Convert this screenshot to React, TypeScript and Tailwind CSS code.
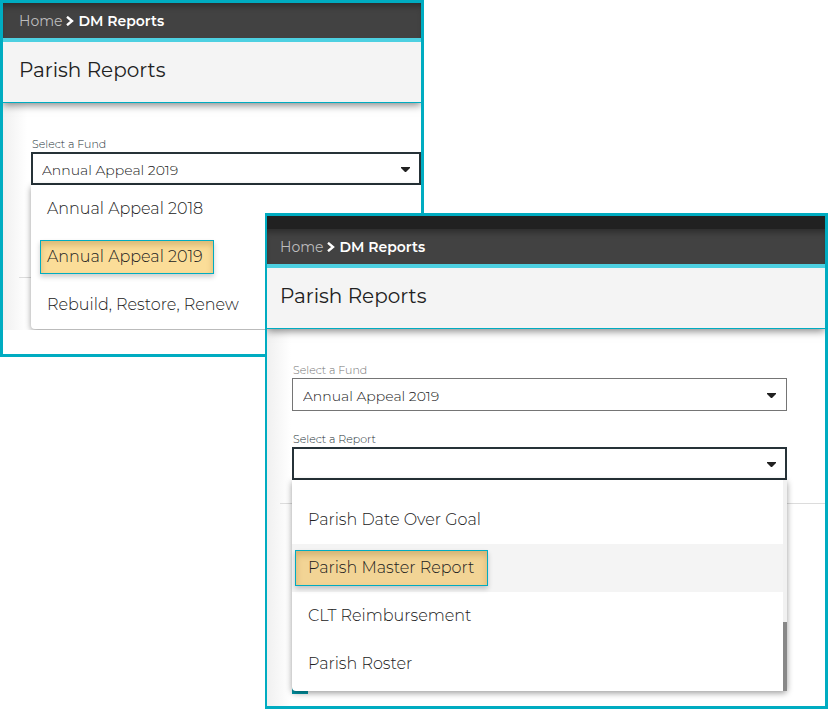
import React, { useState } from 'react';
import clsx from 'clsx';

type SelectFieldProps = {
  id: string;
  label: string;
  value: string;
  options: string[];
  active?: boolean;
  onChange: (value: string) => void;
  children?: React.ReactNode;
};

const SelectField = ({ id, label, value, options, active, onChange, children }: SelectFieldProps) => (
  <div>
    <label
      htmlFor={id}
      className={clsx('block h-4 pl-px text-[11px] leading-4 font-light', active ? 'text-[#263238]' : 'text-[#757575]')}
    >
      {label}
    </label>
    <div className="relative">
      <select
        id={id}
        value={value}
        onChange={(e) => onChange(e.target.value)}
        className={clsx(
          'block h-[33px] w-full appearance-none bg-white pt-0.5 text-sm font-light text-[#212121] outline-none',
          active ? 'border-2 border-[#263238] px-[9px]' : 'border border-[#757575] px-[10px]'
        )}
      >
        {options.map((option) => (
          <option key={option} value={option}>
            {option}
          </option>
        ))}
      </select>
      <svg viewBox="0 0 9 5" className="pointer-events-none absolute top-[15px] right-[11px] h-[5px] w-[9px]" aria-hidden="true">
        <path d="M0 0h9v1L5 5H4L0 1z" fill="#212121" />
      </svg>
      {children}
    </div>
  </div>
);

const PageHeader = ({ inset }: { inset: string }) => (
  <header className="relative">
    <nav
      className={clsx(
        'relative z-10 flex h-[39px] items-center gap-1 border-b-4 border-[#4dd0e1] bg-[#424242] text-sm shadow-[inset_0_6px_6px_-3px_rgba(0,0,0,0.35)]',
        inset
      )}
    >
      <a href="#home" className="text-[#bdbdbd]">
        Home
      </a>
      <svg viewBox="0 0 8 10" className="h-[10px] w-2" fill="none" stroke="#fff" strokeWidth="2.4" aria-hidden="true">
        <path d="M1 .8l5 4.2-5 4.2" />
      </svg>
      <a href="#dm-reports" className="font-semibold text-white" aria-current="page">
        DM Reports
      </a>
    </nav>
    <div
      className={clsx(
        'flex h-[61px] items-center border-b border-[#00acc1] bg-[#f4f4f4] pb-1 shadow-[0_2px_8px_rgba(0,0,0,0.5)]',
        inset
      )}
    >
      <h1 className="text-xl text-[#212121]">Parish Reports</h1>
    </div>
  </header>
);

const MENU = 'absolute inset-x-0 top-full rounded-b bg-white shadow-[0_2px_6px_rgba(0,0,0,0.4)]';
const OPTION = 'flex h-12 w-full items-center text-left text-base font-light text-[#212121]';
const MARK = 'flex items-center border border-[#00acc1] shadow-[inset_0_4px_6px_rgba(120,80,20,0.25),0_3px_5px_rgba(0,0,0,0.2)]';

const funds = ['Annual Appeal 2018', 'Annual Appeal 2019', 'Rebuild, Restore, Renew'];
const reports = ['Parish Date Over Goal', 'Parish Master Report', 'CLT Reimbursement', 'Parish Roster'];

const FundPanel = () => {
  const [fund, setFund] = useState('Annual Appeal 2019');

  return (
    <section className="col-start-1 row-start-1 w-[51.2%] self-start border-3 border-[#00acc1] bg-white pb-6">
      <div className="overflow-hidden">
        <PageHeader inset="pl-4" />
        <div className="bg-linear-to-r from-[#f0f0f0] to-white to-[24px] pt-[33px] pb-[52px] pl-7">
          <SelectField id="fund-open" label="Select a Fund" value={fund} options={funds} active onChange={setFund}>
            <ul className={MENU}>
              {funds.map((name) => (
                <li key={name}>
                  <button
                    type="button"
                    onClick={() => setFund(name)}
                    className={clsx(OPTION, name === fund ? 'pl-[9px]' : 'pl-4')}
                  >
                    {name === fund ? <span className={clsx(MARK, 'h-[34px] w-[174px] bg-[#fbdd98] pl-[6px]')}>{name}</span> : name}
                  </button>
                </li>
              ))}
            </ul>
          </SelectField>
          <hr className="mt-[92px] -ml-3 border-[#dcdcdc]" />
        </div>
      </div>
    </section>
  );
};

const ReportPanel = () => {
  const [fund, setFund] = useState('Annual Appeal 2019');
  const [report, setReport] = useState('');
  const marked = report || 'Parish Master Report';

  return (
    <section className="z-10 col-start-1 row-start-1 mt-[213px] ml-[265px] overflow-hidden border-3 border-l-2 border-[#00acc1] bg-white">
      <div className="h-[13px] bg-[#212121]" />
      <PageHeader inset="pl-[13px]" />
      <div className="bg-linear-to-r from-[#f0f0f0] to-white to-[24px] pt-[33px] pb-3 pl-[25px]">
        <div className="flex flex-col gap-5 pr-[38px]">
          <SelectField id="fund" label="Select a Fund" value={fund} options={funds} onChange={setFund} />
          <SelectField id="report" label="Select a Report" value={report} options={['', ...reports]} active onChange={setReport}>
            <div className={clsx(MENU, 'flex')}>
              <ul className="flex-1 pt-4 pb-[3px]">
                {reports.map((name) => (
                  <li key={name}>
                    <button
                      type="button"
                      onClick={() => setReport(name)}
                      className={clsx(OPTION, name === marked ? 'bg-[#f4f4f4] pl-[3px]' : 'pl-4')}
                    >
                      {name === marked ? <span className={clsx(MARK, 'h-9 w-[193px] bg-[#f2d495] pl-3')}>{name}</span> : name}
                    </button>
                  </li>
                ))}
              </ul>
              {/* scrollbar */}
              <div className="flex w-1 flex-col justify-end bg-[#f1f1f1]">
                <div className="h-[69px] bg-[#888]" />
              </div>
            </div>
          </SelectField>
        </div>
        <hr className="mt-[23px] -ml-3 border-[#dcdcdc]" />
        <button type="button" aria-label="Run report" className="mt-[154px] block h-9 w-4 bg-[#0097a7]" />
      </div>
    </section>
  );
};

const App = () => (
  <main className="grid bg-white font-['Montserrat','Inter',sans-serif]">
    <FundPanel />
    <ReportPanel />
  </main>
);

export default App;
